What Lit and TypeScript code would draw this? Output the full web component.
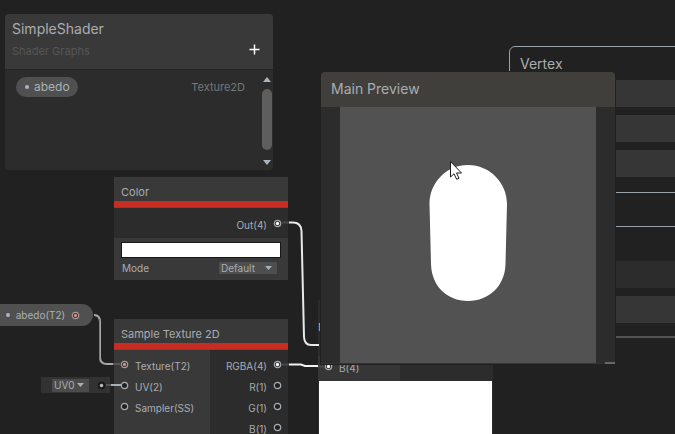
import { LitElement, html, svg, css } from "lit";
import { customElement, property } from "lit/decorators.js";
import { classMap } from "lit/directives/class-map.js";

/** Connection point of a node: empty, connected, or a connected texture. */
@customElement("graph-port")
class GraphPort extends LitElement {
  @property() kind = "empty";

  static styles = css`
    :host { display: block; width: 9px; height: 9px; flex: none; }
    svg { display: block; }
    .ring { fill: #212121; stroke: #a4abb1; stroke-width: 1.2; }
    .dot { fill: #ffffff; }
    .texture .ring { stroke: #a89c9c; }
    .texture .dot { fill: #e08a80; }
    .bare .ring { stroke: #171717; }
    .bare .dot { fill: #b4bcc4; }
  `;

  render() {
    return html`<svg class=${this.kind} width="9" height="9" viewBox="0 0 9 9" aria-hidden="true">
      <circle class="ring" cx="4.5" cy="4.5" r="3.2"></circle>
      ${this.kind === "empty" ? "" : svg`<circle class="dot" cx="4.5" cy="4.5" r="1.7"></circle>`}
    </svg>`;
  }
}

const inputs = [
  { label: "Texture(T2)", kind: "texture" },
  { label: "UV(2)", kind: "empty" },
  { label: "Sampler(SS)", kind: "empty" },
];

const outputs = [
  { label: "RGBA(4)", kind: "linked" },
  { label: "R(1)", kind: "empty" },
  { label: "G(1)", kind: "empty" },
  { label: "B(1)", kind: "empty" },
];

@customElement("app-root")
class AppRoot extends LitElement {
  static styles = css`
    :host {
      display: block;
      position: relative;
      height: 100vh;
      overflow: hidden;
      background: #212121;
      color: #a9adb1;
      font: 10px/16px Inter, "Noto Sans", sans-serif;
    }
    * { box-sizing: border-box; }
    h2, h3, p, ul { margin: 0; padding: 0; font-weight: 400; }
    ul { list-style: none; }
    button, select { font: inherit; color: inherit; border: 0; margin: 0; padding: 0; }

    /* Items on the graph canvas */
    .item { position: absolute; }
    .wires { position: absolute; left: 0; top: 0; pointer-events: none; }
    .wires path { fill: none; stroke-width: 2; }
    .wires .thin { stroke-width: 1; }

    /* Blackboard */
    .blackboard { left: 5px; top: 14px; width: 268px; border-radius: 4px; background: #2c2c2c; overflow: hidden; }
    .board-head { display: flex; align-items: flex-end; justify-content: space-between; height: 56px; padding: 4px 12px 7px 7px; background: #393939; border-bottom: 1px solid #242424; }
    .board-head h2 { font-size: 14px; line-height: 22px; }
    .board-head p { font-size: 11px; line-height: 22px; color: #565656; }
    .add { width: 13px; height: 25px; background: none; }
    .add svg { display: block; margin-left: 1px; }
    .board-body { display: flex; height: 100px; }
    .property { flex: 1; display: flex; justify-content: space-between; align-items: center; height: 20px; margin: 7px 16px 0 11px; font-size: 11px; color: #777777; }
    .pill { display: flex; align-items: center; background: #505050; color: #a9b0b6; border-radius: 11px; }
    .dot { width: 4px; height: 4px; border-radius: 2px; background: #a9b6c2; }
    .property .pill { height: 20px; padding: 0 8px 0 9px; gap: 5px; font-size: 12px; }
    .scroll { width: 12px; display: flex; flex-direction: column; align-items: center; justify-content: space-between; padding: 7px 1px 5px 0; }
    .scroll svg { display: block; }
    .thumb { width: 10px; height: 61px; margin-bottom: 4px; border-radius: 5px; background: #5e5e5e; }

    /* Nodes */
    .node { width: 174px; background: #393939; }
    .node h3 { height: 24px; padding: 7px 7px 0; font-size: 11px; line-height: 16px; }
    .stripe { height: 7px; background: #c72d22; border-bottom: 1px solid #b32a20; }
    .out, .in { display: flex; align-items: flex-start; gap: 6px; height: 21px; padding: 0 6px; line-height: 24px; }
    .out { justify-content: flex-end; }
    .out graph-port, .in graph-port { margin-top: 6px; }
    .color { left: 114px; top: 177px; }
    .color .ports { height: 30px; padding-top: 5px; background: #2c2c2c; }
    .fields { height: 42px; padding: 4px 7px; }
    .swatch { display: block; width: 100%; height: 16px; background: #ffffff; border: 1px solid #171717; }
    .mode { display: flex; align-items: center; justify-content: space-between; padding: 2px 4px 0 1px; }
    .pick { position: relative; display: flex; align-items: center; }
    .pick select { appearance: none; background: #4e4e4e; padding-left: 2px; }
    .pick svg { position: absolute; right: 5px; }
    .mode select { width: 58px; height: 12px; line-height: 12px; }
    .sample { left: 114px; top: 319px; }
    .columns { display: flex; }
    .columns ul { padding-top: 4px; height: 88px; }
    .inputs { width: 96px; }
    .outputs { flex: 1; background: #2c2c2c; }

    .source { left: -10px; top: 304px; width: 103px; height: 22px; padding: 0 13px 0 16px; justify-content: space-between; }
    .source .name { line-height: 24px; }
    .uv { left: 41px; top: 377px; width: 69px; height: 16px; padding: 0 4px 0 11px; display: flex; align-items: center; justify-content: space-between; background: #323232; }
    .uv select { width: 37px; height: 13px; line-height: 13px; background: #4b4b4b; }

    .blend { left: 318px; top: 300px; width: 175px; background: #2c2c2c; }
    .blend h3 { height: 56px; padding-top: 19px; font-size: 11px; line-height: 16px; }
    .blend .in { width: 82px; height: 25px; background: #363636; }
    .result { height: 54px; margin: 0 1px; background: #ffffff; }

    /* Master stack */
    .block { left: 509px; right: -20px; border: 1px solid #98a2ab; border-radius: 6px; background: #212121; }
    .vertex { top: 46px; height: 147px; padding: 7px 10px; }
    .block h2 { height: 26px; font-size: 14px; line-height: 20px; }
    .slots { display: grid; gap: 8px; }
    .slots li { height: 27px; background: #363636; }
    .fragment { top: 226px; height: 112px; padding: 34px 10px 0; border-bottom: 2px solid #525252; }
    .slots .dim { background: #2c2c2c; }

    /* Main preview */
    .preview { left: 321px; top: 72px; width: 294px; padding: 0 19px; border-radius: 4px 4px 0 0; background: #2c2c2c; border-bottom: 1px solid #333333; box-shadow: 0 0 0 1px #212121; }
    .preview h2 { height: 35px; margin: 0 -19px; padding: 7px 10px; border-radius: 4px 4px 0 0; background: #403f3c; font-size: 14px; line-height: 20px; }
    .view { display: block; width: 100%; height: 256px; background: #525252; }
    .grip { left: 605px; top: 362px; width: 10px; height: 2px; background: #686868; }
    .cursor { left: 449px; top: 160px; }
  `;

  private arrow(up = false) {
    return html`<svg width="8" height="5" viewBox="0 0 8 5" aria-hidden="true">
      <path d=${up ? "M0 5 4 0 8 5Z" : "M0 0H8L4 5Z"} fill="#a9b6c2"></path>
    </svg>`;
  }

  private pick(name: string, value: string) {
    return html`<span class="pick">
      <select id=${name} aria-label=${name}><option>${value}</option></select>
      <svg width="7" height="4" viewBox="0 0 7 4" aria-hidden="true"><path d="M0 0H7L3.5 4Z" fill="#a4afb8"></path></svg>
    </span>`;
  }

  render() {
    return html`
      <section class="item block vertex">
        <h2>Vertex</h2>
        <ul class="slots"><li></li><li></li><li></li></ul>
      </section>
      <section class="item block fragment">
        <ul class="slots">
          ${[true, false].map((dim) => html`<li class=${classMap({ dim })}></li>`)}
        </ul>
      </section>

      <article class="item node color">
        <h3>Color</h3>
        <div class="stripe"></div>
        <div class="ports"><div class="out">Out(4)<graph-port kind="linked"></graph-port></div></div>
        <div class="fields">
          <button class="swatch" aria-label="Color value"></button>
          <div class="mode"><label for="mode">Mode</label>${this.pick("mode", "Default")}</div>
        </div>
      </article>

      <article class="item node sample">
        <h3>Sample Texture 2D</h3>
        <div class="stripe"></div>
        <div class="columns">
          <ul class="inputs">
            ${inputs.map((p) => html`<li class="in"><graph-port kind=${p.kind}></graph-port>${p.label}</li>`)}
          </ul>
          <ul class="outputs">
            ${outputs.map((p) => html`<li class="out">${p.label}<graph-port kind=${p.kind}></graph-port></li>`)}
          </ul>
        </div>
      </article>

      <div class="item pill source"><span class="dot"></span><span class="name">abedo(T2)</span><graph-port kind="texture"></graph-port></div>
      <div class="item uv">${this.pick("channel", "UV0")}<graph-port kind="bare"></graph-port></div>

      <article class="item blend">
        <h3>Multiply</h3>
        <div class="in"><graph-port kind="linked"></graph-port>B(4)</div>
        <div class="result"></div>
      </article>

      <svg class="wires" width="675" height="434" viewBox="0 0 675 434" aria-hidden="true">
        <path d="M282 222.500H289" stroke="#484848"></path>
        <path d="M289 222.500H293Q301 222.500 301.500 231L304 337Q304.500 345 311 345H319" stroke="#e6e9ec"></path>
        <path d="M282 364.500H289M317 366.500H325" stroke="#484848"></path>
        <path d="M289 364.500H301L305 366H318" stroke="#f2f4f5"></path>
        <path d="M94 315Q100 315 100 322V357Q100 364 107 364H113" stroke="#a4a8ab"></path>
        <path class="thin" d="M99.500 319V360" stroke="#b0685f"></path>
        <path d="M113 364H120M106 385H111" stroke="#565656"></path>
        <path d="M111 385H121" stroke="#a4afb8"></path>
      </svg>

      <section class="item blackboard">
        <header class="board-head">
          <div><h2>SimpleShader</h2><p>Shader Graphs</p></div>
          <button class="add" aria-label="Add property">
            <svg width="11" height="11" viewBox="0 0 11 11"><path d="M5.500 .5V10.500M.5 5.500H10.500" stroke="#ffffff" stroke-width="1.500"></path></svg>
          </button>
        </header>
        <div class="board-body">
          <div class="property">
            <span class="pill"><span class="dot"></span>abedo</span>
            <span>Texture2D</span>
          </div>
          <div class="scroll">${this.arrow(true)}<div class="thumb"></div>${this.arrow()}</div>
        </div>
      </section>

      <section class="item preview">
        <h2>Main Preview</h2>
        <svg class="view" viewBox="0 0 256 256" role="img" aria-label="Capsule preview">
          <path d="M128 58C150 58 167 76 167 97L165.500 157C165 179 149 194 128 194C107 194 91.500 179 91 157L89.500 97C89.500 76 106 58 128 58Z" fill="#ffffff"></path>
        </svg>
      </section>
      <div class="item grip"></div>
      <svg class="item cursor" width="14" height="21" viewBox="0 0 14 21" aria-hidden="true">
        <path d="M1.500 1.500V17L5 13.800L7.700 19.300L10 18.200L7.500 13H12.500Z" fill="#ffffff" stroke="#1c1c1c"></path>
      </svg>
    `;
  }
}
